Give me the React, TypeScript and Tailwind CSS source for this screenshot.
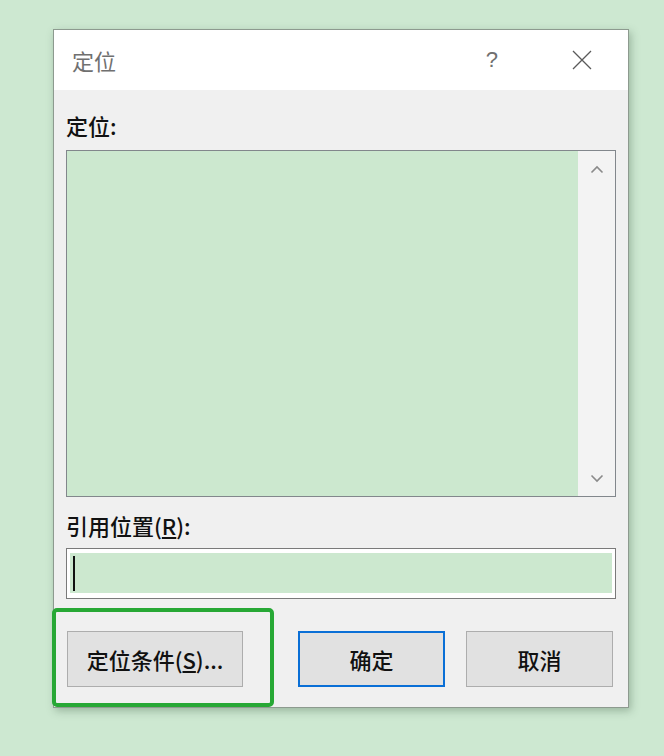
import React from 'react';

const cjk = "font-['Noto_Sans_CJK_SC','Noto_Sans',sans-serif]";

function Chevron({ up }: { up?: boolean }) {
  return (
    <svg width="14" height="9" viewBox="0 0 14 9" className="text-[#8a8a8a]">
      <path
        d={up ? 'M1.5 7.5 L7 2 L12.5 7.5' : 'M1.5 1.5 L7 7 L12.5 1.5'}
        fill="none"
        stroke="currentColor"
        strokeWidth="1.6"
      />
    </svg>
  );
}

function DialogButton({ children, primary, width }: { children: React.ReactNode; primary?: boolean; width: string }) {
  return (
    <button
      className={`${width} h-[56px] bg-[#e1e1e1] text-[22px] font-medium text-[#111] flex items-center justify-center ${
        primary ? 'border-2 border-[#0a6fd6]' : 'border border-[#adadad]'
      }`}
    >
      {children}
    </button>
  );
}

export default function App() {
  return (
    <div className={`min-h-[756px] bg-[#cde8d1] pt-[29px] pl-[53px] ${cjk}`}>
      <div className="relative w-[576px] border border-[#8d9a8f] shadow-[2px_3px_8px_rgba(60,90,65,0.35)]">
        {/* title bar */}
        <div className="h-[60px] bg-white flex items-center pl-[18px] pr-[36px]">
          <span className="text-[22px] text-[#707070] leading-none">定位</span>
          <span className="ml-auto text-[22px] text-[#707070] leading-none font-['Liberation_Sans',sans-serif] mr-[74px]">?</span>
          <svg width="20" height="20" viewBox="0 0 20 20" className="text-[#5a5a5a]">
            <path d="M1 1 L19 19 M19 1 L1 19" stroke="currentColor" strokeWidth="1.3" fill="none" />
          </svg>
        </div>

        {/* body */}
        <div className="bg-[#f0f0f0] px-[12px] pt-[22px] pb-[20px]">
          <div className="h-[26px] leading-[26px] text-[22px] font-medium text-[#111]">定位:</div>
          <div className="mt-[12px] h-[347px] border border-[#82878c] flex">
            <div className="flex-1 bg-[#cce8cf]" />
            <div className="w-[37px] bg-[#f3f3f3] flex flex-col items-center justify-between pt-[14px] pb-[13px]">
              <Chevron up />
              <Chevron />
            </div>
          </div>

          <div className="mt-[15px] h-[26px] leading-[26px] text-[22px] font-medium text-[#111]">
            引用位置(<span className="underline underline-offset-2">R</span>):
          </div>
          <div className="mt-[10px] h-[51px] border border-[#7a7a7a] bg-white pt-[4px] pl-[3px] pr-[3px] pb-[5px]">
            <div className="h-full bg-[#cce8cf] flex items-center pl-[3px]">
              <div className="w-[2px] h-[35px] bg-[#111]" />
            </div>
          </div>

          <div className="mt-[32px] flex pl-[1px]">
            <DialogButton width="w-[176px]">
              定位条件(<span className="underline underline-offset-2">S</span>)...
            </DialogButton>
            <div className="ml-[55px]">
              <DialogButton width="w-[147px]" primary>
                确定
              </DialogButton>
            </div>
            <div className="ml-[21px]">
              <DialogButton width="w-[147px]">取消</DialogButton>
            </div>
          </div>
        </div>

        {/* annotation highlight */}
        <div className="absolute left-[-2px] top-[578px] w-[222px] h-[99px] border-[4px] border-[#27a835] rounded-[5px]" />
      </div>
    </div>
  );
}
